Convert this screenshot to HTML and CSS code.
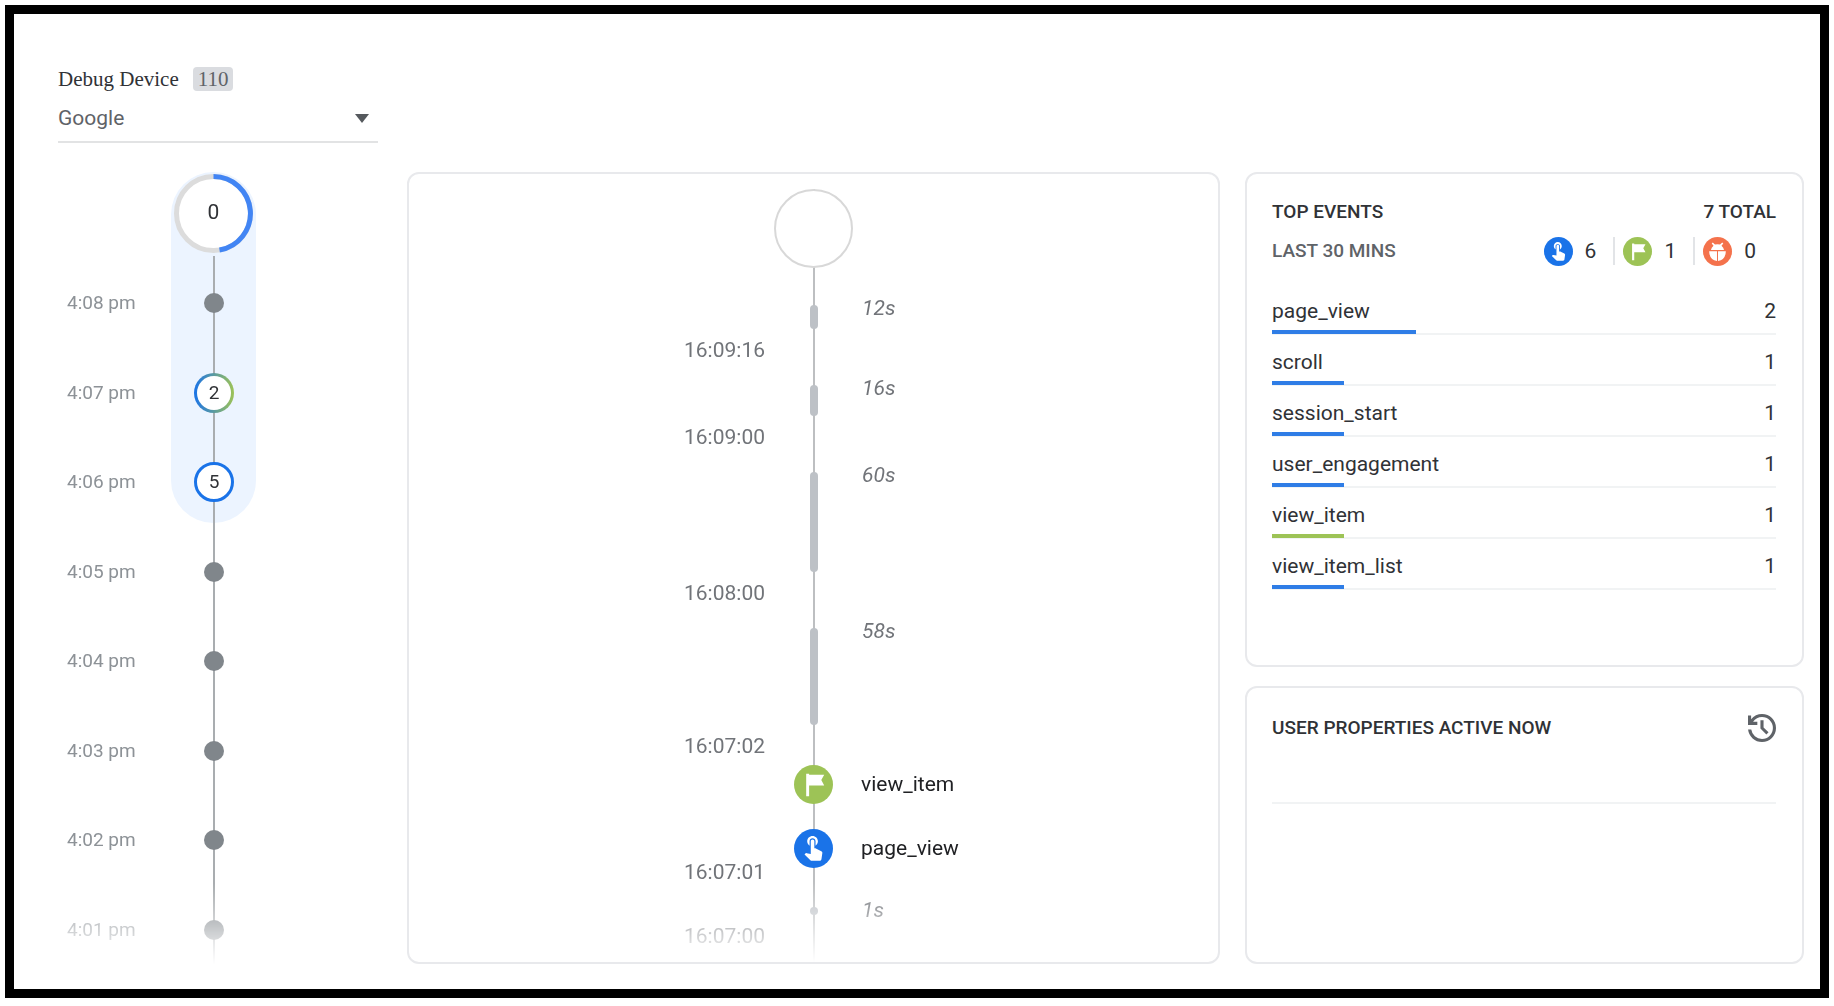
FILE: index.html
```html
<!DOCTYPE html>
<html lang="en">
<head>
  <meta charset="UTF-8">
  <meta name="viewport" content="width=device-width, initial-scale=1">
  <title>DebugView</title>
  <link rel="stylesheet" href="styles.css">
</head>
<body>

<!-- shared icons -->
<svg class="sprite" aria-hidden="true">
  <symbol id="icon-touch" viewBox="0 0 40 40">
    <circle cx="20" cy="20" r="20" fill="#1a73e8"/>
    <g transform="translate(5 3.4) scale(1.22)" fill="#fff">
      <path d="M9 11.24V7.5C9 6.12 10.12 5 11.5 5S14 6.12 14 7.5v3.74c1.21-.81 2-2.18 2-3.74C16 5.01 13.99 3 11.5 3S7 5.01 7 7.5c0 1.56.79 2.93 2 3.74zm9.84 4.63l-4.54-2.26c-.17-.07-.35-.11-.54-.11H13v-6c0-.83-.67-1.5-1.5-1.5S10 6.67 10 7.5v10.74l-3.43-.72c-.08-.01-.15-.03-.24-.03-.31 0-.59.13-.79.33l-.79.8 4.94 4.94c.27.27.65.44 1.06.44h6.79c.75 0 1.33-.55 1.44-1.28l.75-5.27c.01-.07.02-.14.02-.2 0-.62-.38-1.16-.91-1.38z"/>
    </g>
  </symbol>
  <symbol id="icon-flag" viewBox="0 0 40 40">
    <circle cx="20" cy="20" r="20" fill="#9dc356"/>
    <path d="M12.5 9h3v1H31l-3 5.500 3 5.500H15.500V32h-3z" fill="#fff"/>
  </symbol>
  <symbol id="icon-bug" viewBox="0 0 40 40">
    <circle cx="20" cy="20" r="20" fill="#f4724c"/>
    <path d="M13.500 7.500l3 3q3.500-1 7 0l3-3 1.500 1.500-2.500 3q3 2.500 3.500 6H11q.5-3.500 3.500-6L12 9z" fill="#fff"/>
    <path d="M8.500 19.500h10.800V33Q9 32 8.500 19.500zM20.700 19.500h10.800Q31 32 20.700 33z" fill="#fff"/>
  </symbol>
</svg>

<div class="frame">

  <header class="device">
    <div class="device-title">
      <label for="device">Debug Device</label>
      <span class="badge">110</span>
    </div>
    <div class="select-wrap">
      <select id="device">
        <option>Google</option>
      </select>
      <svg class="caret" viewBox="0 0 14 9" aria-hidden="true"><path d="M0 0h14L7 9z"/></svg>
    </div>
  </header>

  <main class="dashboard">

    <section class="minutes">
      <div class="active-range"></div>
      <div class="countdown">
        <svg viewBox="0 0 79 79" aria-hidden="true">
          <circle cx="39.5" cy="39.5" r="37" fill="#fff" stroke="#dcdcdc" stroke-width="5"/>
          <path d="M39.5 2.500a37 37 0 0 1 6 73.500" fill="none" stroke="#4285f4" stroke-width="5"/>
        </svg>
        <span>0</span>
      </div>
      <ul class="minute-list">
        <li><time>4:08 pm</time><i class="dot"></i></li>
        <li><time>4:07 pm</time><b class="ring ring-mixed">2</b></li>
        <li><time>4:06 pm</time><b class="ring">5</b></li>
        <li><time>4:05 pm</time><i class="dot"></i></li>
        <li><time>4:04 pm</time><i class="dot"></i></li>
        <li><time>4:03 pm</time><i class="dot"></i></li>
        <li><time>4:02 pm</time><i class="dot"></i></li>
        <li><time>4:01 pm</time><i class="dot"></i></li>
      </ul>
    </section>

    <section class="card stream-card">
      <div class="stream">
        <div class="now"></div>
        <div class="wait"><i style="height: 24px"></i><em>12s</em></div>
        <div class="stamp"><time>16:09:16</time></div>
        <div class="wait"><i style="height: 31px"></i><em>16s</em></div>
        <div class="stamp"><time>16:09:00</time></div>
        <div class="wait"><i style="height: 100px"></i><em>60s</em></div>
        <div class="stamp"><time>16:08:00</time></div>
        <div class="wait"><i style="height: 97px"></i><em>58s</em></div>
        <div class="stamp"><time>16:07:02</time></div>
        <div class="event"><svg><use href="#icon-flag"/></svg><span>view_item</span></div>
        <div class="event"><svg><use href="#icon-touch"/></svg><span>page_view</span></div>
        <div class="stamp"><time>16:07:01</time></div>
        <div class="wait"><i style="height: 8px"></i><em>1s</em></div>
        <div class="stamp"><time>16:07:00</time></div>
      </div>
    </section>

    <div class="side">
      <section class="card top-events">
        <div class="card-row">
          <h2>TOP EVENTS</h2>
          <strong>7 TOTAL</strong>
        </div>
        <div class="card-row">
          <h3>LAST 30 MINS</h3>
          <ul class="counts">
            <li><svg><use href="#icon-touch"/></svg><span>6</span></li>
            <li><svg><use href="#icon-flag"/></svg><span>1</span></li>
            <li><svg><use href="#icon-bug"/></svg><span>0</span></li>
          </ul>
        </div>
        <ul class="event-list">
          <li><span>page_view</span><span>2</span><i class="bar" style="width: 28.57%"></i></li>
          <li><span>scroll</span><span>1</span><i class="bar" style="width: 14.29%"></i></li>
          <li><span>session_start</span><span>1</span><i class="bar" style="width: 14.29%"></i></li>
          <li><span>user_engagement</span><span>1</span><i class="bar" style="width: 14.29%"></i></li>
          <li><span>view_item</span><span>1</span><i class="bar bar-green" style="width: 14.29%"></i></li>
          <li><span>view_item_list</span><span>1</span><i class="bar" style="width: 14.29%"></i></li>
        </ul>
      </section>

      <section class="card user-props">
        <div class="card-row">
          <h2>USER PROPERTIES ACTIVE NOW</h2>
          <button type="button" class="history" aria-label="History">
            <svg viewBox="3 3 18 18" aria-hidden="true"><path d="M12 21q-3.450 0-6.012-2.287Q3.425 16.425 3.050 13H5.100q.35 2.600 2.313 4.300Q9.375 19 12 19q2.925 0 4.963-2.038Q19 14.925 19 12t-2.037-4.963Q14.925 5 12 5q-1.725 0-3.225.8T6.250 8H9v2H3V4h2v2.350q1.275-1.600 3.113-2.475Q9.950 3 12 3q1.875 0 3.513.712 1.637.713 2.850 1.926 1.212 1.212 1.925 2.850Q21 10.125 21 12t-.712 3.512q-.713 1.638-1.925 2.850-1.213 1.213-2.850 1.926Q13.875 21 12 21Zm2.800-4.800L11 12.400V7h2v4.600l3.200 3.200Z"/></svg>
          </button>
        </div>
        <hr>
      </section>
    </div>

  </main>
</div>

</body>
</html>
```

FILE: styles.css
```css
* {
  box-sizing: border-box;
}

body {
  margin: 0;
  padding: 5px 5px 8px;
  background: #fff;
  color: #303236;
  font-family: Roboto, Arial, sans-serif;
  font-size: 21px;
  line-height: 24px;
}

ul {
  list-style: none;
  margin: 0;
  padding: 0;
}

.sprite {
  display: none;
}

.frame {
  display: flex;
  flex-direction: column;
  min-height: calc(100vh - 13px);
  padding: 53px 16px 25px 44px;
  border: 9px solid #000;
}

/* device picker */
.device {
  width: 320px;
  margin-bottom: 29px;
}

.device-title {
  display: flex;
  align-items: center;
  gap: 14px;
  font-family: "Liberation Serif", "Times New Roman", serif;
}

.badge {
  padding: 0 5px;
  border-radius: 4px;
  background: #dadce0;
  color: #5f6368;
}

.select-wrap {
  position: relative;
  margin-top: 9px;
}

.select-wrap select {
  appearance: none;
  display: block;
  width: 100%;
  height: 43px;
  padding: 0 0 6px;
  border: 0;
  border-bottom: 2px solid #e2e3e4;
  border-radius: 0;
  background: none;
  color: #5f6368;
  font: inherit;
}

.caret {
  position: absolute;
  top: 14px;
  right: 9px;
  width: 14px;
  height: 9px;
  fill: #55595d;
  pointer-events: none;
}

/* columns */
.dashboard {
  flex: 1;
  display: grid;
  grid-template-columns: 324px 16fr 11fr;
  gap: 25px;
}

.card {
  border: 2px solid #e8e9ec;
  border-radius: 12px;
}

/* minutes timeline */
.minutes {
  position: relative;
  display: flex;
  flex-direction: column;
  mask-image: linear-gradient(#000 calc(100% - 80px), transparent);
}

.active-range {
  position: absolute;
  top: 0;
  left: 113px;
  z-index: -1;
  width: 85px;
  height: 351px;
  border-radius: 43px;
  background: #ecf4ff;
}

.countdown {
  position: relative;
  width: 79px;
  height: 79px;
  margin: 2px 0 3px 116px;
}

.countdown svg {
  display: block;
}

.countdown span {
  position: absolute;
  inset: 0;
  line-height: 77px;
  text-align: center;
}

.minute-list {
  flex: 1;
  display: flex;
  flex-direction: column;
  justify-content: space-between;
  padding: 37px 0 24px;
  background: linear-gradient(#a9adb0, #a9adb0) 155px 0 / 2px 100% no-repeat;
}

.minute-list li {
  display: flex;
  align-items: center;
  height: 20px;
  padding-left: 9px;
}

.minute-list time {
  width: 127px;
  color: #8d9297;
  font-size: 19px;
}

.dot {
  width: 20px;
  height: 20px;
  margin-left: 10px;
  border-radius: 50%;
  background: #80868b;
}

.ring {
  width: 40px;
  height: 40px;
  border: 3px solid #1a73e8;
  border-radius: 50%;
  background: #fff;
  font-size: 19px;
  font-weight: 400;
  line-height: 34px;
  text-align: center;
}

.ring-mixed {
  border-color: transparent;
  background: linear-gradient(#fff, #fff) padding-box, linear-gradient(90deg, #1a73e8, #9dc356) border-box;
}

/* event stream */
.stream {
  height: 100%;
  padding: 15px 0 11px;
  mask-image: linear-gradient(#000 calc(100% - 80px), transparent);
  background: linear-gradient(#bdbfc1, #bdbfc1) center / 2px 100% no-repeat;
  color: #717479;
}

.now {
  width: 79px;
  height: 79px;
  margin: 0 auto 28px;
  border: 2px solid #d8d8d8;
  border-radius: 50%;
  background: #fff;
}

.stream-card {
  position: relative;
}

/* hides the line above the circle */
.stream-card::before {
  content: "";
  position: absolute;
  top: 0;
  left: 50%;
  z-index: 1;
  width: 10px;
  height: 15px;
  margin-left: -5px;
  background: #fff;
}

.wait,
.stamp,
.event {
  display: grid;
  grid-template-columns: 1fr 39px 1fr;
}

.wait,
.event {
  margin-top: 14px;
}

.wait i {
  grid-column: 2;
  width: 8px;
  margin: 9px auto;
  border-radius: 4px;
  background: #bdc1c6;
}

.wait em {
  padding-left: 29px;
}

.stamp time {
  padding-right: 29px;
  text-align: right;
}

.event {
  grid-template-rows: 24px;
  align-items: center;
  color: #202124;
}

.event + .event {
  margin-top: 40px;
}

.event svg {
  grid-column: 2;
  width: 39px;
  height: 39px;
}

.event span {
  padding-left: 28px;
}

/* right column */
.side {
  display: grid;
  grid-template-rows: 16fr 9fr;
  gap: 19px;
}

.top-events,
.user-props {
  padding: 26px 26px 0 25px;
}

.card-row {
  display: flex;
  align-items: center;
  justify-content: space-between;
}

h2,
h3,
.card-row strong {
  margin: 0;
  font-size: 19px;
  font-weight: 500;
}

h3 {
  color: #5f6368;
}

.top-events .card-row + .card-row {
  margin-top: 13px;
}

.counts {
  display: flex;
  padding-right: 20px;
}

.counts li {
  display: flex;
  align-items: center;
  height: 28px;
}

.counts li + li {
  margin-left: 17px;
  padding-left: 8px;
  border-left: 2px solid #e2e4e7;
}

.counts svg {
  width: 29px;
  height: 29px;
  margin-right: 12px;
}

.event-list {
  margin-top: 19px;
}

.event-list li {
  position: relative;
  display: flex;
  justify-content: space-between;
  height: 51px;
  padding-top: 15px;
  border-bottom: 2px solid #f1f3f4;
}

.bar {
  position: absolute;
  bottom: -1px;
  left: 0;
  height: 4px;
  background: #2f7de6;
}

.bar-green {
  background: #9dc356;
}

.history {
  padding: 0;
  border: 0;
  background: none;
  cursor: pointer;
}

.history svg {
  display: block;
  width: 28px;
  height: 28px;
  fill: #5f6368;
}

hr {
  margin: 60px 0 0;
  border: 0;
  border-top: 2px solid #f1f3f4;
}
```
